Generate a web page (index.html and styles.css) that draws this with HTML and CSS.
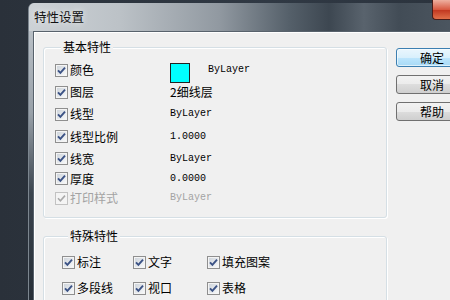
FILE: index.html
```html
<!DOCTYPE html>
<html lang="zh-CN">
<head>
    <meta charset="UTF-8">
    <title>特性设置</title>
    <link rel="stylesheet" href="styles.css">
</head>
<body>

    <svg class="defs" width="0" height="0">
        <defs>
            <linearGradient id="boxfill" x1="0" y1="0" x2="1" y2="1">
                <stop offset="0" stop-color="#cfd5dc"/>
                <stop offset="1" stop-color="#f7f8f9"/>
            </linearGradient>
        </defs>
        <symbol id="chk" viewBox="0 0 13 13">
            <rect x="0.5" y="0.5" width="12" height="12" fill="#f4f4f4" stroke="#8f8f8f"/>
            <rect x="2" y="2" width="9" height="9" fill="url(#boxfill)"/>
            <path d="M3 6.3 L5.4 8.8 L10 3.6" fill="none" stroke="#3b5285" stroke-width="1.9"/>
        </symbol>
        <symbol id="chk-off" viewBox="0 0 13 13">
            <rect x="0.5" y="0.5" width="12" height="12" fill="#f4f4f4" stroke="#c2c2c2"/>
            <path d="M3 6.3 L5.4 8.8 L10 3.6" fill="none" stroke="#a9a9a9" stroke-width="1.6"/>
        </symbol>
    </svg>

    <div class="window">
        <div class="titlebar">
            <span class="title">特性设置</span>
            <span class="close"></span>
        </div>

        <div class="client">
            <div class="groups">
                <fieldset class="group basic">
                    <legend>基本特性</legend>

                    <div class="prop">
                        <label class="check"><svg class="cb"><use href="#chk"/></svg>颜色</label>
                        <div class="value"><span class="swatch"></span><span class="mono">ByLayer</span></div>
                    </div>
                    <div class="prop">
                        <label class="check"><svg class="cb"><use href="#chk"/></svg>图层</label>
                        <div class="value">2细线层</div>
                    </div>
                    <div class="prop">
                        <label class="check"><svg class="cb"><use href="#chk"/></svg>线型</label>
                        <div class="value mono">ByLayer</div>
                    </div>
                    <div class="prop tall">
                        <label class="check"><svg class="cb"><use href="#chk"/></svg>线型比例</label>
                        <div class="value mono">1.0000</div>
                    </div>
                    <div class="prop mid">
                        <label class="check"><svg class="cb"><use href="#chk"/></svg>线宽</label>
                        <div class="value mono">ByLayer</div>
                    </div>
                    <div class="prop short">
                        <label class="check"><svg class="cb"><use href="#chk"/></svg>厚度</label>
                        <div class="value mono">0.0000</div>
                    </div>
                    <div class="prop last disabled">
                        <label class="check"><svg class="cb"><use href="#chk-off"/></svg>打印样式</label>
                        <div class="value mono">ByLayer</div>
                    </div>
                </fieldset>

                <fieldset class="group special">
                    <legend>特殊特性</legend>
                    <div class="special-grid">
                        <label class="check"><svg class="cb"><use href="#chk"/></svg>标注</label>
                        <label class="check"><svg class="cb"><use href="#chk"/></svg>文字</label>
                        <label class="check"><svg class="cb"><use href="#chk"/></svg>填充图案</label>
                        <label class="check"><svg class="cb"><use href="#chk"/></svg>多段线</label>
                        <label class="check"><svg class="cb"><use href="#chk"/></svg>视口</label>
                        <label class="check"><svg class="cb"><use href="#chk"/></svg>表格</label>
                    </div>
                </fieldset>
            </div>

            <div class="buttons">
                <button class="btn default">确定</button>
                <button class="btn">取消</button>
                <button class="btn">帮助</button>
            </div>
        </div>
    </div>

</body>
</html>
```

FILE: styles.css
```css
html, body {
    margin: 0;
    height: 100%;
    overflow: hidden;
}
body {
    background: linear-gradient(to right, #2a313a, #303944 60%, #2b333d);
    font-family: "Noto Sans CJK SC", "Noto Sans", sans-serif;
    font-size: 12px;
    color: #000;
}
.defs {
    position: absolute;
}
.window {
    position: relative;
    margin: 3px 0 0 28px;
    width: 421px;
    height: 297px;
    border-left: 1px solid #7c868f;
    border-radius: 6px 0 0 0;
    background: linear-gradient(#c4cad0, #99a1a9 110px, #3b444e 190px, #262e37);
}
.titlebar {
    height: 28px;
    display: flex;
    align-items: center;
    padding-left: 5px;
    border-radius: 6px 0 0 0;
    background: linear-gradient(to right, #cdd2d6 0, #bcc2c7 90px, #9199a1 190px, #55606a 260px, #3d4751 300px, #59636d 335px, #424c56 370px, #4b555f 420px);
}
.title {
    font-size: 12.5px;
    line-height: 16px;
    color: #111;
    text-shadow: 0 0 6px rgba(255, 255, 255, 0.9);
}
.close {
    position: absolute;
    top: -3px;
    left: 403px;
    width: 18px;
    height: 20px;
    box-sizing: border-box;
    border: 1px solid #4a1c18;
    border-top: none;
    border-right: none;
    border-radius: 0 0 0 4px;
    background: linear-gradient(#eeb0a0, #d85a42 50%, #c0361f 52%, #e0704a);
}
.client {
    margin-left: 4px;
    height: 268px;
    display: flex;
    overflow: hidden;
    border-top: 1px solid #58626c;
    border-left: 1px solid #58626c;
    background: #f0f0f0;
    box-shadow: inset 1px 1px 0 #ffffff;
}
.groups {
    padding: 8px 0 0 9px;
    width: 344px;
    flex-shrink: 0;
}
.group {
    margin: 0;
    padding: 0;
    min-width: 0;
    border: 1px solid #d5dfe5;
    border-radius: 3px;
    box-shadow: inset 1px 1px 0 #ffffff, 1px 1px 0 #ffffff;
}
.group legend {
    margin-left: 6px;
    padding: 0 2px;
    line-height: 14px;
    background: #f0f0f0;
}
.basic {
    padding: 5px 0 9px 11px;
}
.prop {
    display: flex;
    align-items: center;
    height: 22px;
}
.prop.tall {
    height: 23px;
}
.prop.mid {
    height: 21px;
}
.prop.short {
    height: 19px;
}
.prop.last {
    height: 20px;
}
.check {
    display: flex;
    align-items: center;
    gap: 2px;
    line-height: 14px;
    white-space: nowrap;
}
.prop .check {
    width: 115px;
}
.cb {
    width: 13px;
    height: 13px;
    flex-shrink: 0;
}
.value {
    display: flex;
    align-items: center;
    line-height: 14px;
}
.mono {
    font-family: "Liberation Mono", monospace;
    font-size: 10px;
}
.swatch {
    width: 20px;
    height: 20px;
    margin: 6px 18px 0 0;
    box-sizing: border-box;
    border: 1px solid #222;
    background: #00ffff;
}
.disabled .check,
.disabled .value {
    color: #a3a3a3;
}
.special {
    margin-top: 11px;
    padding: 6px 0 0 18px;
    height: 90px;
}
.special-grid {
    display: grid;
    grid-template-columns: 71px 74px auto;
    grid-auto-rows: 26px;
    align-items: center;
}
.buttons {
    margin-left: 9px;
    padding-top: 16px;
    display: flex;
    flex-direction: column;
    gap: 8px;
}
.btn {
    width: 72px;
    height: 19px;
    padding: 0;
    flex-shrink: 0;
    box-sizing: border-box;
    border: 1px solid #707070;
    border-radius: 3px;
    background: linear-gradient(#f2f2f2, #ebebeb 50%, #dddddd 50%, #cfcfcf);
    font-family: "Noto Sans CJK SC", sans-serif;
    font-size: 12px;
    line-height: 15px;
    color: #000;
}
.btn.default {
    border-color: #3c7fb1;
    background: linear-gradient(#eaf6fd, #d9f0fc 50%, #bee6fd 50%, #a7d9f5);
    box-shadow: inset 0 0 0 1px rgba(255, 255, 255, 0.6);
}
```
